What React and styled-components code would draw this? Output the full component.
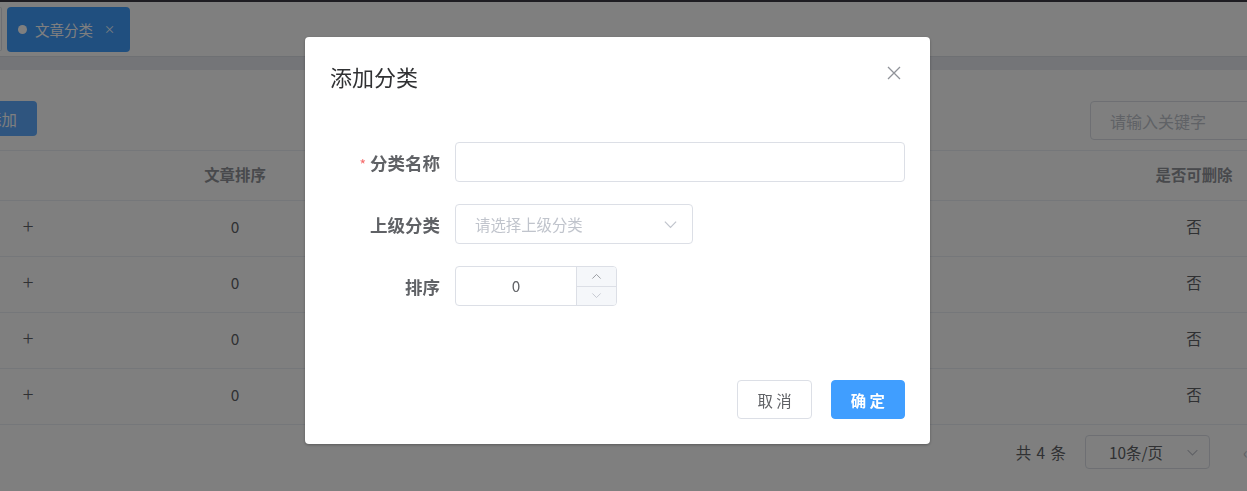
import React from 'react';
import styled, { createGlobalStyle } from 'styled-components';

const primary = '#409eff';
const borderColor = '#dcdfe6';
const lineColor = '#ebeef5';
const textRegular = '#606266';
const textSecondary = '#909399';
const placeholder = '#c0c4cc';

const GlobalStyle = createGlobalStyle`
  html, body {
    margin: 0;
    padding: 0;
    background: #fff;
    overflow: hidden;
    font-family: "Noto Sans CJK SC", "Noto Sans", "Liberation Sans", sans-serif;
  }
  * {
    box-sizing: border-box;
  }
`;

const Page = styled.div`
  min-height: 100vh;
  background: #fff;
`;

const TopLine = styled.div`
  height: 2px;
  background: #3c3b45;
`;

const TagBar = styled.div`
  height: 54px;
  display: flex;
  align-items: center;
  gap: 5px;
  background: #fff;
`;

const TagEdge = styled.div`
  width: 2px;
  height: 44px;
  border: 1px solid ${borderColor};
  border-left: none;
  border-radius: 0 4px 4px 0;
`;

const Tag = styled.div`
  width: 123px;
  height: 45px;
  display: flex;
  align-items: center;
  gap: 8px;
  padding: 0 0 0 11px;
  border-radius: 4px;
  background: ${primary};
  color: #fff;
  font-size: 14.5px;
`;

const TagDot = styled.span`
  width: 9px;
  height: 9px;
  border-radius: 50%;
  background: #fff;
`;

const TagClose = styled.span`
  margin-left: 3px;
  font-size: 11px;
  line-height: 1;
`;

const Band = styled.div`
  height: 14px;
  background: #e8ebf1;
  border-top: 1px solid #dde0e6;
`;

const Content = styled.div`
  padding-top: 31px;
`;

const Toolbar = styled.div`
  display: flex;
  justify-content: space-between;
  align-items: flex-start;
  margin: 0 -40px 10px -34px;
`;

const AddButton = styled.button`
  height: 35px;
  padding: 0 20px;
  border: none;
  border-radius: 4px;
  background: #5eabff;
  color: #fff;
  font-family: inherit;
  font-size: 15.4px;
`;

const SearchInput = styled.div`
  width: 197px;
  height: 39px;
  display: flex;
  align-items: center;
  padding-left: 19px;
  border: 1px solid ${borderColor};
  border-radius: 4px;
  color: ${placeholder};
  font-size: 16px;
`;

const Table = styled.div`
  border-top: 1px solid ${lineColor};
  margin-right: -12px;
`;

const Row = styled.div`
  display: grid;
  grid-template-columns: 56px 114px 130px 1fr 130px;
  align-items: center;
  height: ${p => (p.$head ? 50 : 56)}px;
  padding-bottom: ${p => (p.$head ? 4 : 6)}px;
  border-bottom: 1px solid ${lineColor};
  color: ${p => (p.$head ? textSecondary : textRegular)};
  font-size: 15.4px;
  font-weight: ${p => (p.$head ? 700 : 400)};
`;

const Cell = styled.div`
  text-align: center;
`;

const Expand = styled.span`
  font-size: 20px;
  font-weight: 300;
  color: ${textRegular};
`;

const Pager = styled.div`
  display: flex;
  justify-content: flex-end;
  align-items: center;
  margin: 10px -13px 0 0;
  color: ${textRegular};
  font-size: 15.4px;
`;

const Total = styled.span`
  margin-right: 19px;
  word-spacing: 2px;
`;

const SizeSelect = styled.div`
  width: 125px;
  height: 34px;
  display: flex;
  align-items: center;
  justify-content: space-between;
  padding: 0 10px 0 23px;
  border: 1px solid ${borderColor};
  border-radius: 4px;
`;

const PrevButton = styled.div`
  width: 50px;
  padding-left: 33px;
  color: ${placeholder};
  font-size: 16px;
`;

const Mask = styled.div`
  position: fixed;
  inset: 0;
  display: flex;
  justify-content: center;
  align-items: flex-start;
  padding: 37px 12px 0 0;
  background: rgba(0, 0, 0, 0.5);
`;

const Dialog = styled.div`
  width: 625px;
  background: #fff;
  border-radius: 4px;
  box-shadow: 0 1px 3px rgba(0, 0, 0, 0.3);
`;

const DialogHeader = styled.div`
  display: flex;
  justify-content: space-between;
  align-items: center;
  padding: 24px 29px 11px 25px;
`;

const DialogTitle = styled.span`
  font-size: 22px;
  line-height: 30px;
  color: #303133;
`;

const CloseButton = styled.span`
  display: flex;
  margin-top: -6px;
`;

const DialogBody = styled.div`
  padding: 40px 25px 32px;
`;

const FormItem = styled.div`
  display: flex;
  align-items: center;
  margin-bottom: 22px;
`;

const Label = styled.label`
  width: 125px;
  padding-right: 15px;
  text-align: right;
  font-size: 17.5px;
  font-weight: 700;
  color: ${textRegular};
`;

const Star = styled.span`
  margin-right: 4px;
  color: #f56c6c;
  font-size: 14px;
  font-weight: 400;
`;

const TextInput = styled.div`
  flex: 1;
  height: 40px;
  border: 1px solid ${borderColor};
  border-radius: 4px;
`;

const Select = styled.div`
  width: 238px;
  height: 40px;
  display: flex;
  align-items: center;
  justify-content: space-between;
  padding: 0 14px 0 19px;
  border: 1px solid ${borderColor};
  border-radius: 4px;
  color: ${placeholder};
  font-size: 15.4px;
`;

const NumberInput = styled.div`
  width: 162px;
  height: 40px;
  display: flex;
  border: 1px solid ${borderColor};
  border-radius: 4px;
  overflow: hidden;
`;

const NumberValue = styled.div`
  flex: 1;
  display: flex;
  align-items: center;
  justify-content: center;
  padding-bottom: 2px;
  color: ${textRegular};
  font-size: 15.4px;
`;

const Stepper = styled.div`
  width: 40px;
  display: flex;
  flex-direction: column;
  border-left: 1px solid ${borderColor};
  background: #f5f7fa;
`;

const Step = styled.div`
  flex: 1;
  display: flex;
  align-items: center;
  justify-content: center;
  & + & {
    border-top: 1px solid ${borderColor};
  }
`;

const DialogFooter = styled.div`
  display: flex;
  justify-content: flex-end;
  gap: 19px;
  padding: 20px 25px 25px;
`;

const Button = styled.button`
  height: 39px;
  padding: 0 19px;
  border: 1px solid ${p => (p.$primary ? primary : borderColor)};
  border-radius: 4px;
  background: ${p => (p.$primary ? primary : '#fff')};
  color: ${p => (p.$primary ? '#fff' : textRegular)};
  font-family: inherit;
  font-size: 15.4px;
  font-weight: ${p => (p.$primary ? 700 : 400)};
  white-space: pre;
`;

const Chevron = ({ up, size = 13, color = placeholder }) => (
  <svg width={size} height={size} viewBox="0 0 16 16" fill="none">
    <path
      d={up ? 'M2 11 L8 5 L14 11' : 'M2 5 L8 11 L14 5'}
      stroke={color}
      strokeWidth="1.3"
    />
  </svg>
);

const rows = [1, 2, 3, 4];

export default function App() {
  return (
    <Page>
      <GlobalStyle />
      <TopLine />
      <TagBar>
        <TagEdge />
        <Tag>
          <TagDot />
          文章分类
          <TagClose>×</TagClose>
        </Tag>
      </TagBar>
      <Band />
      <Content>
        <Toolbar>
          <AddButton>添加</AddButton>
          <SearchInput>请输入关键字</SearchInput>
        </Toolbar>
        <Table>
          <Row $head>
            <Cell />
            <Cell />
            <Cell>文章排序</Cell>
            <Cell />
            <Cell>是否可删除</Cell>
          </Row>
          {rows.map(r => (
            <Row key={r}>
              <Cell>
                <Expand>+</Expand>
              </Cell>
              <Cell />
              <Cell>0</Cell>
              <Cell />
              <Cell>否</Cell>
            </Row>
          ))}
        </Table>
        <Pager>
          <Total>共 4 条</Total>
          <SizeSelect>
            10条/页
            <Chevron />
          </SizeSelect>
          <PrevButton>‹</PrevButton>
        </Pager>
      </Content>

      <Mask>
        <Dialog>
          <DialogHeader>
            <DialogTitle>添加分类</DialogTitle>
            <CloseButton>
              <svg width="14" height="14" viewBox="0 0 14 14">
                <path d="M1 1 L13 13 M13 1 L1 13" stroke={textSecondary} strokeWidth="1.3" />
              </svg>
            </CloseButton>
          </DialogHeader>
          <DialogBody>
            <FormItem>
              <Label>
                <Star>*</Star>分类名称
              </Label>
              <TextInput />
            </FormItem>
            <FormItem>
              <Label>上级分类</Label>
              <Select>
                请选择上级分类
                <Chevron size={15} />
              </Select>
            </FormItem>
            <FormItem>
              <Label>排序</Label>
              <NumberInput>
                <NumberValue>0</NumberValue>
                <Stepper>
                  <Step>
                    <Chevron up size={11} color={textSecondary} />
                  </Step>
                  <Step>
                    <Chevron size={11} color={placeholder} />
                  </Step>
                </Stepper>
              </NumberInput>
            </FormItem>
          </DialogBody>
          <DialogFooter>
            <Button>取 消</Button>
            <Button $primary>确 定</Button>
          </DialogFooter>
        </Dialog>
      </Mask>
    </Page>
  );
}
